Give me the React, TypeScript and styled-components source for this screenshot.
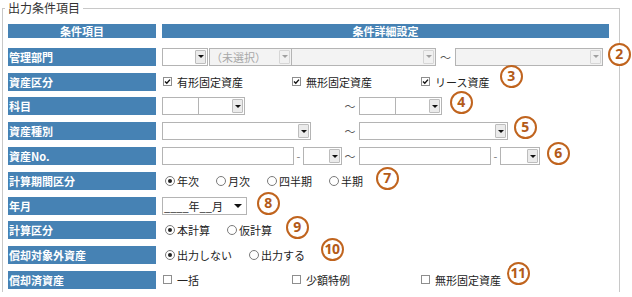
import React from "react"
import styled, { createGlobalStyle } from "styled-components"

const GlobalStyle = createGlobalStyle`
  body {
    margin: 0;
    background: #fff;
    font-family: "Noto Sans CJK JP", "Noto Sans", sans-serif;
    color: #222;
  }
`

const BLUE = "#4682b4"

const Page = styled.div`
  position: relative;
  width: 632px;
  height: 297px;
  overflow: hidden;
`

const Frame = styled.fieldset`
  margin: 0 0 0 2px;
  width: 618px;
  height: 292px;
  box-sizing: border-box;
  border: 1px solid #c8c8c8;
  border-bottom: none;
  padding: 8px 10px 0 5px;
  min-inline-size: 0;
`

const Legend = styled.legend`
  font-size: 12px;
  line-height: 16px;
  padding: 0 3px;
  margin-left: -3px;
  color: #333;
`

const Table = styled.div`
  display: flex;
  flex-direction: column;
  gap: 6.78px;
`

const HeaderRow = styled.div`
  display: grid;
  grid-template-columns: 148px 447px;
  column-gap: 6px;
  height: 14px;
  margin-bottom: 3.2px;
`

const HeaderCell = styled.div`
  background: ${BLUE};
  color: #fff;
  font-size: 11px;
  font-weight: 700;
  line-height: 14px;
  text-align: center;
`

const Row = styled.div`
  display: grid;
  grid-template-columns: 148px 447px;
  column-gap: 6px;
  height: 18px;
`

const Label = styled.div`
  background: ${BLUE};
  color: #fff;
  font-size: 11px;
  font-weight: 700;
  line-height: 18px;
  padding-left: 1px;
  white-space: nowrap;
`

const Controls = styled.div`
  display: flex;
  align-items: center;
  height: 18px;
  font-size: 11px;
  white-space: nowrap;
`

const SelectBox = styled.div<{ $w: number; $disabled?: boolean; $ml?: number }>`
  width: ${({ $w }) => $w}px;
  margin-left: ${({ $ml }) => $ml ?? 0}px;
  height: 18px;
  box-sizing: border-box;
  border: 1px solid #b4b4b4;
  background: ${({ $disabled }) => ($disabled ? "#f3f3f3" : "#fff")};
  color: ${({ $disabled }) => ($disabled ? "#a8a8a8" : "#222")};
  display: flex;
  align-items: center;
  justify-content: space-between;
  padding-left: 1px;
  font-size: 11px;
  line-height: 16px;
`

const ArrowButton = styled.span<{ $disabled?: boolean }>`
  width: 11px;
  height: 14px;
  margin-right: 1px;
  box-sizing: border-box;
  background: ${({ $disabled }) => ($disabled ? "#f1f1f1" : "#ebebeb")};
  border: 1px solid ${({ $disabled }) => ($disabled ? "#d6d6d6" : "#bdbdbd")};
  border-radius: 1px;
  display: flex;
  align-items: center;
  justify-content: center;

  &::after {
    content: "";
    border-left: 3px solid transparent;
    border-right: 3px solid transparent;
    border-top: 3px solid ${({ $disabled }) => ($disabled ? "#a0a0a0" : "#111")};
  }
`

const PlainArrow = styled.span`
  margin-right: 4px;
  border-left: 4px solid transparent;
  border-right: 4px solid transparent;
  border-top: 4px solid #111;
`

const TextBox = styled.div<{ $w: number }>`
  width: ${({ $w }) => $w}px;
  height: 18px;
  box-sizing: border-box;
  border: 1px solid #b4b4b4;
  background: #fff;
`

const Tilde = styled.span<{ $w: number }>`
  width: ${({ $w }) => $w}px;
  text-align: center;
  color: #555;
  font-size: 11px;
`

const Dash = styled.span`
  width: 9px;
  text-align: center;
  color: #777;
  font-size: 11px;
`

const LeftSlot = styled.div`
  width: 181px;
  display: flex;
  align-items: center;
`

const RightSlot = styled.div`
  margin-left: 2px;
  display: flex;
  align-items: center;
`

const CheckOption = styled.label`
  width: 129px;
  display: flex;
  align-items: center;
  gap: 5px;
  padding-left: 1px;
  box-sizing: border-box;
`

const CheckBox = styled.span`
  width: 9px;
  height: 9px;
  box-sizing: border-box;
  border: 1px solid #8e8e8e;
  background: #fff;
  display: flex;
  align-items: center;
  justify-content: center;
`

const RadioGroup = styled.div`
  display: flex;
  align-items: center;
  padding-left: 3px;
`

const RadioOption = styled.label`
  display: flex;
  align-items: center;
  gap: 2px;
  margin-right: 17px;
`

const RadioCircle = styled.span<{ $on?: boolean }>`
  width: 10px;
  height: 10px;
  box-sizing: border-box;
  border: 1px solid #7a7a7a;
  border-radius: 50%;
  background: #fff;
  display: flex;
  align-items: center;
  justify-content: center;

  &::after {
    content: "";
    width: 4px;
    height: 4px;
    border-radius: 50%;
    background: ${({ $on }) => ($on ? "#222" : "transparent")};
  }
`

const Badge = styled.div`
  position: absolute;
  width: 23px;
  height: 23px;
  box-sizing: border-box;
  border: 2.5px solid #c0641e;
  border-radius: 50%;
  background: #fff;
  color: #b35a18;
  font-family: "Noto Sans", sans-serif;
  font-size: 14px;
  font-weight: 700;
  display: flex;
  align-items: center;
  justify-content: center;
  line-height: 1;
  letter-spacing: -0.5px;
`

const Select = ({ w, disabled, ml, text }: { w: number; disabled?: boolean; ml?: number; text?: string }) => (
  <SelectBox $w={w} $disabled={disabled} $ml={ml}>
    <span>{text}</span>
    <ArrowButton $disabled={disabled} />
  </SelectBox>
)

const Check = ({ label, on }: { label: string; on?: boolean }) => (
  <CheckOption>
    <CheckBox>
      {on && (
        <svg width="7" height="7" viewBox="0 0 7 7">
          <path d="M1 3.4 L2.8 5.2 L6 1.6" fill="none" stroke="#111" strokeWidth="1.4" />
        </svg>
      )}
    </CheckBox>
    {label}
  </CheckOption>
)

const Radios = ({ items, on }: { items: string[]; on: number }) => (
  <RadioGroup>
    {items.map((t, i) => (
      <RadioOption key={t}>
        <RadioCircle $on={i === on} />
        {t}
      </RadioOption>
    ))}
  </RadioGroup>
)

const badges = [
  { n: 2, x: 619, y: 54 },
  { n: 3, x: 511, y: 76 },
  { n: 4, x: 461, y: 102 },
  { n: 5, x: 525, y: 127 },
  { n: 6, x: 558, y: 153 },
  { n: 7, x: 387, y: 178 },
  { n: 8, x: 268, y: 203 },
  { n: 9, x: 297, y: 227 },
  { n: 10, x: 332, y: 249 },
  { n: 11, x: 518, y: 273 },
]

const App = () => {
  return (
    <Page>
      <GlobalStyle />
      <Frame>
        <Legend>出力条件項目</Legend>
        <Table>
          <HeaderRow>
            <HeaderCell>条件項目</HeaderCell>
            <HeaderCell>条件詳細設定</HeaderCell>
          </HeaderRow>

          <Row>
            <Label>管理部門</Label>
            <Controls>
              <Select w={46} />
              <Select w={83} ml={1} disabled text="（未選択）" />
              <Select w={145} ml={-1} disabled />
              <Tilde $w={19}>～</Tilde>
              <Select w={148} disabled />
            </Controls>
          </Row>

          <Row>
            <Label>資産区分</Label>
            <Controls>
              <Check label="有形固定資産" on />
              <Check label="無形固定資産" on />
              <Check label="リース資産" on />
            </Controls>
          </Row>

          <Row>
            <Label>科目</Label>
            <Controls>
              <LeftSlot>
                <TextBox $w={37} />
                <Select w={47} ml={-1} />
              </LeftSlot>
              <Tilde $w={14}>～</Tilde>
              <RightSlot>
                <TextBox $w={37} />
                <Select w={47} ml={-1} />
              </RightSlot>
            </Controls>
          </Row>

          <Row>
            <Label>資産種別</Label>
            <Controls>
              <LeftSlot>
                <Select w={149} />
              </LeftSlot>
              <Tilde $w={14}>～</Tilde>
              <RightSlot>
                <Select w={149} />
              </RightSlot>
            </Controls>
          </Row>

          <Row>
            <Label>資産No.</Label>
            <Controls>
              <LeftSlot>
                <TextBox $w={132} />
                <Dash>-</Dash>
                <Select w={39} />
              </LeftSlot>
              <Tilde $w={14}>～</Tilde>
              <RightSlot>
                <TextBox $w={132} />
                <Dash>-</Dash>
                <Select w={40} />
              </RightSlot>
            </Controls>
          </Row>

          <Row>
            <Label>計算期間区分</Label>
            <Controls>
              <Radios items={["年次", "月次", "四半期", "半期"]} on={0} />
            </Controls>
          </Row>

          <Row>
            <Label>年月</Label>
            <Controls>
              <SelectBox $w={85}>
                <span>____年__月</span>
                <PlainArrow />
              </SelectBox>
            </Controls>
          </Row>

          <Row>
            <Label>計算区分</Label>
            <Controls>
              <Radios items={["本計算", "仮計算"]} on={0} />
            </Controls>
          </Row>

          <Row>
            <Label>償却対象外資産</Label>
            <Controls>
              <Radios items={["出力しない", "出力する"]} on={0} />
            </Controls>
          </Row>

          <Row>
            <Label>償却済資産</Label>
            <Controls>
              <Check label="一括" />
              <Check label="少額特例" />
              <Check label="無形固定資産" />
            </Controls>
          </Row>
        </Table>
      </Frame>

      {badges.map((b) => (
        <Badge key={b.n} style={{ left: b.x - 11.5, top: b.y - 11.5 }}>
          {b.n}
        </Badge>
      ))}
    </Page>
  )
}

export default App
